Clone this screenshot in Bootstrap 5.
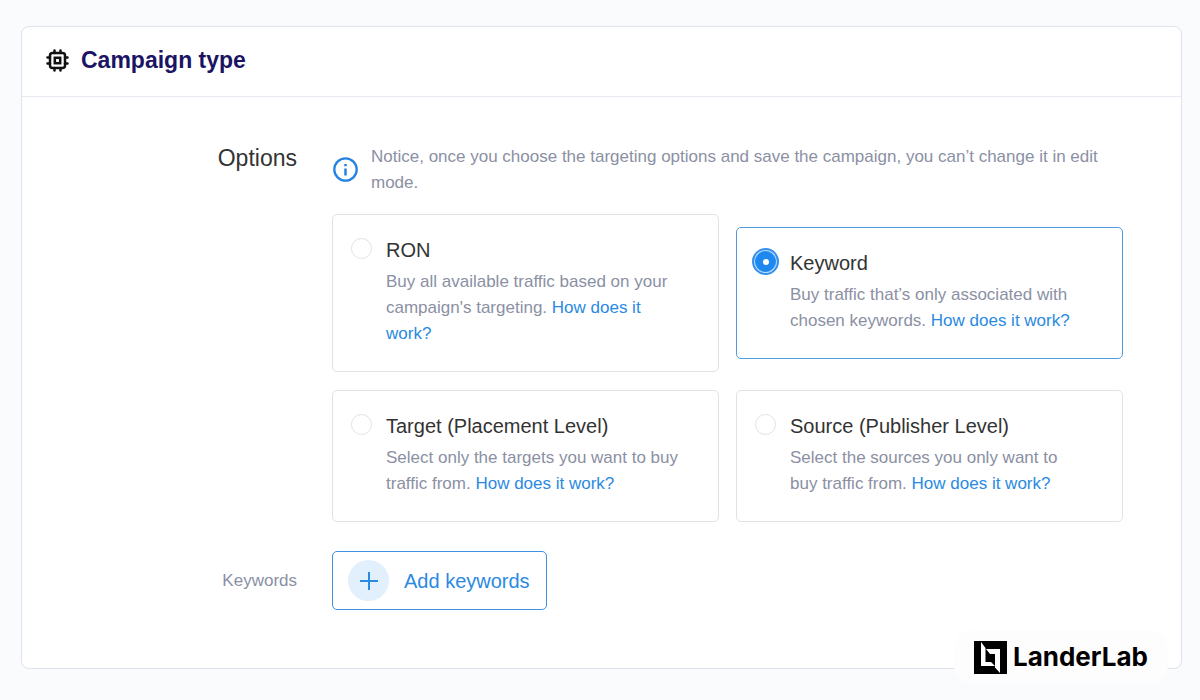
<!DOCTYPE html>
<html lang="en">
<head>
<meta charset="utf-8">
<meta name="viewport" content="width=device-width, initial-scale=1">
<title>Campaign type</title>
<link href="https://cdn.jsdelivr.net/npm/bootstrap@5.3.0/dist/css/bootstrap.min.css" rel="stylesheet">
<style>
  :root { --accent: #1e87f0; --link: #2a8ae2; --muted: #8b90a4; --line: #e1e2e8; }
  body { background: #fafbfd; color: #333; font-family: "Liberation Sans", Arial, sans-serif; font-size: 17px; line-height: 26px; }
  a { color: var(--link); text-decoration: none; }
  .page { padding: 26px 18px 31px 21px; }
  .panel { border-color: #dfe2ee; border-radius: 8px; }
  .panel-head { padding: 16px 24px 19px; border-bottom: 1px solid #e8eaf2; }
  .panel-title { font-size: 23px; line-height: 34px; font-weight: 700; color: #1b1464; }
  .panel-body { padding: 47px 58px 58px 24px; }
  .form-line { display: grid; grid-template-columns: 251px minmax(0, 1fr); column-gap: 35px; }
  .main-label { font-size: 23px; line-height: 28px; }
  .text-soft { color: var(--muted); }
  .notice { gap: 13px; margin-bottom: 18px; }
  .options { display: grid; grid-template-columns: repeat(2, minmax(0, 1fr)); gap: 18px 17px; align-items: center; }
  .option { border: 1px solid var(--line); border-radius: 5px; padding: 20px 37px 24px 18px; gap: 14px; }
  .option.selected { border-color: #4f9de0; }
  .option-name { font-size: 20px; line-height: 30px; margin-bottom: 4px; display: block; color: #333; }
  .option .form-check-input { width: 21px; height: 21px; margin: 3px 0 0; border-color: #e2e2e6; flex: none; box-shadow: none; }
  .option .form-check-input:checked { background-color: var(--accent); border-color: var(--accent); background-size: 12px; box-shadow: 0 0 0 1px #b5dbff, 0 0 0 3px #3490ec; }
  .add-btn { --bs-btn-color: #2a8ae2; --bs-btn-border-color: #3f92df; --bs-btn-hover-bg: #eef6fe; --bs-btn-hover-color: #2a8ae2; --bs-btn-hover-border-color: #3f92df; border-radius: 5px; padding: 8px 16px 8px 15px; font-size: 20px; line-height: 30px; gap: 15px; }
  .add-icon { width: 41px; height: 41px; background: #e2effc; }
  .keywords { margin-top: 29px; }
  .brand { right: 32px; bottom: 16px; padding: 10px 20px; gap: 6px; background: #fdfdfe; border-radius: 20px; color: #000; }
  .brand:hover { color: #000; }
  .brand-name { font-family: Inter, sans-serif; font-weight: 700; font-size: 26px; line-height: 34px; }
</style>
</head>
<body>
<main class="page position-relative">
  <section class="card panel">
    <header class="panel-head d-flex align-items-center">
      <svg width="23" height="23" viewBox="0 0 23 23" fill="none" stroke="#111" stroke-width="2.5" stroke-linecap="round" aria-hidden="true">
        <rect x="4" y="4" width="15" height="15" rx="2.5"/>
        <rect x="8.8" y="8.8" width="5.4" height="5.4"/>
        <path d="M8.5 4V1.5M14.5 4V1.5M8.5 19v2.5M14.5 19v2.5M4 8.5H1.5M4 14.5H1.5M19 8.5h2.5M19 14.5h2.5"/>
      </svg>
      <h1 class="panel-title mb-0 ms-2 ps-1">Campaign type</h1>
    </header>
    <form class="panel-body">
      <div class="form-line">
        <div class="main-label text-end" id="options-label">Options</div>
        <div>
          <div class="notice d-flex align-items-center text-soft">
            <svg class="flex-shrink-0" width="26" height="26" viewBox="0 0 26 26" fill="none" stroke="#2583e2" aria-hidden="true">
              <circle cx="13.5" cy="12.5" r="11.2" stroke-width="2.3"/>
              <path d="M13.5 11.5v7M13.5 7v2.3" stroke-width="2.5"/>
            </svg>
            <span>Notice, once you choose the targeting options and save the campaign, you can’t change it in edit mode.</span>
          </div>
          <div class="options" role="radiogroup" aria-labelledby="options-label">
            <div class="option d-flex align-items-start">
              <input class="form-check-input" type="radio" name="type" id="ron">
              <div><label class="option-name" for="ron">RON</label>
                <p class="text-soft mb-0">Buy all available traffic based on your campaign's targeting. <a href="#">How does it work?</a></p></div>
            </div>
            <div class="option selected d-flex align-items-start">
              <input class="form-check-input" type="radio" name="type" id="keyword" checked>
              <div><label class="option-name" for="keyword">Keyword</label>
                <p class="text-soft mb-0">Buy traffic that’s only associated with chosen keywords. <a href="#">How does it work?</a></p></div>
            </div>
            <div class="option d-flex align-items-start">
              <input class="form-check-input" type="radio" name="type" id="target">
              <div><label class="option-name" for="target">Target (Placement Level)</label>
                <p class="text-soft mb-0">Select only the targets you want to buy traffic from. <a href="#">How does it work?</a></p></div>
            </div>
            <div class="option d-flex align-items-start">
              <input class="form-check-input" type="radio" name="type" id="source">
              <div><label class="option-name" for="source">Source (Publisher Level)</label>
                <p class="text-soft mb-0">Select the sources you only want to buy traffic from. <a href="#">How does it work?</a></p></div>
            </div>
          </div>
        </div>
      </div>
      <div class="form-line keywords align-items-center">
        <label class="text-end text-soft" for="add">Keywords</label>
        <div class="d-flex">
          <button class="btn add-btn d-inline-flex align-items-center" type="button" id="add">
            <span class="add-icon rounded-circle d-flex align-items-center justify-content-center">
              <svg width="20" height="20" viewBox="0 0 20 20" stroke="#2a8ae2" stroke-width="2" aria-hidden="true"><path d="M10 1v18M1 10h18"/></svg>
            </span>
            Add keywords
          </button>
        </div>
      </div>
    </form>
  </section>
  <a class="brand position-absolute d-flex align-items-center" href="#">
    <svg width="33" height="33" viewBox="0 0 33 33" aria-hidden="true">
      <path fill="#000" d="M0 0h33v33H0z"/>
      <path fill="#fff" d="M7 1l4.500 6v14H17l4 4H7zM12 8h14v24l-5-5.500V13h-5z"/>
    </svg>
    <span class="brand-name">LanderLab</span>
  </a>
</main>
<script src="https://cdn.jsdelivr.net/npm/bootstrap@5.3.0/dist/js/bootstrap.bundle.min.js"></script>
</body>
</html>
